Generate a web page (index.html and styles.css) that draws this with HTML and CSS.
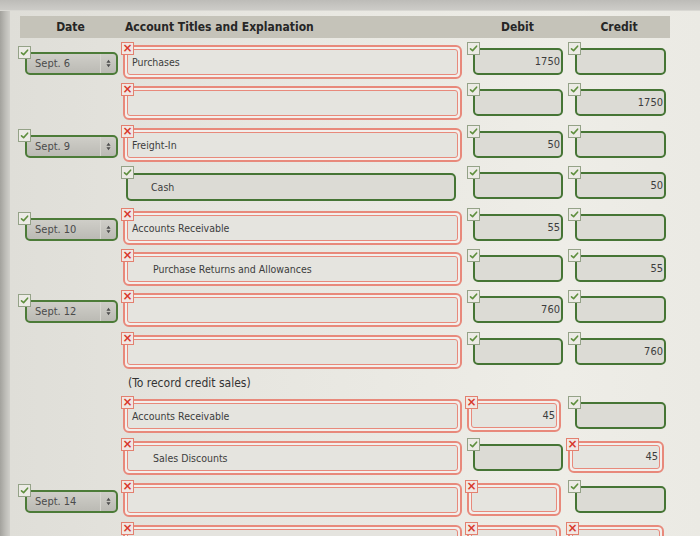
FILE: index.html
```html
<!DOCTYPE html>
<html>
<head>
<meta charset="utf-8">
<link rel="stylesheet" href="styles.css">
</head>
<body>
<div class="screen">
  <div class="topbar"></div>
  <div class="main">
    <div class="leftbar"></div>
    <div class="panel">
      <div class="header">
        <div class="h-date">Date</div>
        <div class="h-acct">Account Titles and Explanation</div>
        <div class="h-num">Debit</div>
        <div class="h-num">Credit</div>
      </div>

      <div class="rows">
        <!-- 1 -->
        <div class="row">
          <div class="cell date"><span class="icon ok"><svg viewBox="0 0 11 11"><path d="M2.5 5.8 L4.6 7.6 L8.6 3.2"/></svg></span><div class="select"><span class="val">Sept. 6</span><span class="arrows"><svg viewBox="0 0 6 10"><path d="M3 0.5 L5.5 4 L0.5 4 Z M3 9.5 L5.5 6 L0.5 6 Z"/></svg></span></div></div>
          <div class="cell acct"><span class="icon bad">×</span><div class="field red"><div class="inner">Purchases</div></div></div>
          <div class="cell debit"><span class="icon ok"><svg viewBox="0 0 11 11"><path d="M2.5 5.8 L4.6 7.6 L8.6 3.2"/></svg></span><div class="field green num">1750</div></div>
          <div class="cell credit"><span class="icon ok"><svg viewBox="0 0 11 11"><path d="M2.5 5.8 L4.6 7.6 L8.6 3.2"/></svg></span><div class="field green num"></div></div>
        </div>
        <!-- 2 -->
        <div class="row">
          <div class="cell date"></div>
          <div class="cell acct"><span class="icon bad">×</span><div class="field red"><div class="inner"></div></div></div>
          <div class="cell debit"><span class="icon ok"><svg viewBox="0 0 11 11"><path d="M2.5 5.8 L4.6 7.6 L8.6 3.2"/></svg></span><div class="field green num"></div></div>
          <div class="cell credit"><span class="icon ok"><svg viewBox="0 0 11 11"><path d="M2.5 5.8 L4.6 7.6 L8.6 3.2"/></svg></span><div class="field green num">1750</div></div>
        </div>
        <!-- 3 -->
        <div class="row">
          <div class="cell date"><span class="icon ok"><svg viewBox="0 0 11 11"><path d="M2.5 5.8 L4.6 7.6 L8.6 3.2"/></svg></span><div class="select"><span class="val">Sept. 9</span><span class="arrows"><svg viewBox="0 0 6 10"><path d="M3 0.5 L5.5 4 L0.5 4 Z M3 9.5 L5.5 6 L0.5 6 Z"/></svg></span></div></div>
          <div class="cell acct"><span class="icon bad">×</span><div class="field red"><div class="inner">Freight-In</div></div></div>
          <div class="cell debit"><span class="icon ok"><svg viewBox="0 0 11 11"><path d="M2.5 5.8 L4.6 7.6 L8.6 3.2"/></svg></span><div class="field green num">50</div></div>
          <div class="cell credit"><span class="icon ok"><svg viewBox="0 0 11 11"><path d="M2.5 5.8 L4.6 7.6 L8.6 3.2"/></svg></span><div class="field green num"></div></div>
        </div>
        <!-- 4 -->
        <div class="row">
          <div class="cell date"></div>
          <div class="cell acct"><span class="icon ok"><svg viewBox="0 0 11 11"><path d="M2.5 5.8 L4.6 7.6 L8.6 3.2"/></svg></span><div class="field green indent">Cash</div></div>
          <div class="cell debit"><span class="icon ok"><svg viewBox="0 0 11 11"><path d="M2.5 5.8 L4.6 7.6 L8.6 3.2"/></svg></span><div class="field green num"></div></div>
          <div class="cell credit"><span class="icon ok"><svg viewBox="0 0 11 11"><path d="M2.5 5.8 L4.6 7.6 L8.6 3.2"/></svg></span><div class="field green num">50</div></div>
        </div>
        <!-- 5 -->
        <div class="row">
          <div class="cell date"><span class="icon ok"><svg viewBox="0 0 11 11"><path d="M2.5 5.8 L4.6 7.6 L8.6 3.2"/></svg></span><div class="select"><span class="val">Sept. 10</span><span class="arrows"><svg viewBox="0 0 6 10"><path d="M3 0.5 L5.5 4 L0.5 4 Z M3 9.5 L5.5 6 L0.5 6 Z"/></svg></span></div></div>
          <div class="cell acct"><span class="icon bad">×</span><div class="field red"><div class="inner">Accounts Receivable</div></div></div>
          <div class="cell debit"><span class="icon ok"><svg viewBox="0 0 11 11"><path d="M2.5 5.8 L4.6 7.6 L8.6 3.2"/></svg></span><div class="field green num">55</div></div>
          <div class="cell credit"><span class="icon ok"><svg viewBox="0 0 11 11"><path d="M2.5 5.8 L4.6 7.6 L8.6 3.2"/></svg></span><div class="field green num"></div></div>
        </div>
        <!-- 6 -->
        <div class="row">
          <div class="cell date"></div>
          <div class="cell acct"><span class="icon bad">×</span><div class="field red"><div class="inner indent">Purchase Returns and Allowances</div></div></div>
          <div class="cell debit"><span class="icon ok"><svg viewBox="0 0 11 11"><path d="M2.5 5.8 L4.6 7.6 L8.6 3.2"/></svg></span><div class="field green num"></div></div>
          <div class="cell credit"><span class="icon ok"><svg viewBox="0 0 11 11"><path d="M2.5 5.8 L4.6 7.6 L8.6 3.2"/></svg></span><div class="field green num">55</div></div>
        </div>
        <!-- 7 -->
        <div class="row">
          <div class="cell date"><span class="icon ok"><svg viewBox="0 0 11 11"><path d="M2.5 5.8 L4.6 7.6 L8.6 3.2"/></svg></span><div class="select"><span class="val">Sept. 12</span><span class="arrows"><svg viewBox="0 0 6 10"><path d="M3 0.5 L5.5 4 L0.5 4 Z M3 9.5 L5.5 6 L0.5 6 Z"/></svg></span></div></div>
          <div class="cell acct"><span class="icon bad">×</span><div class="field red"><div class="inner"></div></div></div>
          <div class="cell debit"><span class="icon ok"><svg viewBox="0 0 11 11"><path d="M2.5 5.8 L4.6 7.6 L8.6 3.2"/></svg></span><div class="field green num">760</div></div>
          <div class="cell credit"><span class="icon ok"><svg viewBox="0 0 11 11"><path d="M2.5 5.8 L4.6 7.6 L8.6 3.2"/></svg></span><div class="field green num"></div></div>
        </div>
        <!-- 8 -->
        <div class="row">
          <div class="cell date"></div>
          <div class="cell acct"><span class="icon bad">×</span><div class="field red"><div class="inner"></div></div></div>
          <div class="cell debit"><span class="icon ok"><svg viewBox="0 0 11 11"><path d="M2.5 5.8 L4.6 7.6 L8.6 3.2"/></svg></span><div class="field green num"></div></div>
          <div class="cell credit"><span class="icon ok"><svg viewBox="0 0 11 11"><path d="M2.5 5.8 L4.6 7.6 L8.6 3.2"/></svg></span><div class="field green num">760</div></div>
        </div>

        <div class="note">(To record credit sales)</div>

        <!-- 9 -->
        <div class="row r2">
          <div class="cell date"></div>
          <div class="cell acct"><span class="icon bad">×</span><div class="field red"><div class="inner">Accounts Receivable</div></div></div>
          <div class="cell debit"><span class="icon bad">×</span><div class="field red"><div class="inner num">45</div></div></div>
          <div class="cell credit"><span class="icon ok"><svg viewBox="0 0 11 11"><path d="M2.5 5.8 L4.6 7.6 L8.6 3.2"/></svg></span><div class="field green num"></div></div>
        </div>
        <!-- 10 -->
        <div class="row r2">
          <div class="cell date"></div>
          <div class="cell acct"><span class="icon bad">×</span><div class="field red"><div class="inner indent">Sales Discounts</div></div></div>
          <div class="cell debit"><span class="icon ok"><svg viewBox="0 0 11 11"><path d="M2.5 5.8 L4.6 7.6 L8.6 3.2"/></svg></span><div class="field green num"></div></div>
          <div class="cell credit"><span class="icon bad">×</span><div class="field red"><div class="inner num">45</div></div></div>
        </div>
        <!-- 11 -->
        <div class="row r2">
          <div class="cell date"><span class="icon ok"><svg viewBox="0 0 11 11"><path d="M2.5 5.8 L4.6 7.6 L8.6 3.2"/></svg></span><div class="select"><span class="val">Sept. 14</span><span class="arrows"><svg viewBox="0 0 6 10"><path d="M3 0.5 L5.5 4 L0.5 4 Z M3 9.5 L5.5 6 L0.5 6 Z"/></svg></span></div></div>
          <div class="cell acct"><span class="icon bad">×</span><div class="field red"><div class="inner"></div></div></div>
          <div class="cell debit"><span class="icon bad">×</span><div class="field red"><div class="inner num"></div></div></div>
          <div class="cell credit"><span class="icon ok"><svg viewBox="0 0 11 11"><path d="M2.5 5.8 L4.6 7.6 L8.6 3.2"/></svg></span><div class="field green num"></div></div>
        </div>
        <!-- 12 -->
        <div class="row r2">
          <div class="cell date"></div>
          <div class="cell acct"><span class="icon bad">×</span><div class="field red"><div class="inner"></div></div></div>
          <div class="cell debit"><span class="icon bad">×</span><div class="field red"><div class="inner num"></div></div></div>
          <div class="cell credit"><span class="icon bad">×</span><div class="field red"><div class="inner num"></div></div></div>
        </div>
      </div>
    </div>
  </div>
</div>
</body>
</html>
```
FILE: styles.css
```css
* { box-sizing: border-box; }
html, body { margin: 0; padding: 0; }
body {
  width: 700px;
  height: 536px;
  overflow: hidden;
  background: #e6e5df;
  font-family: "DejaVu Sans", "Liberation Sans", sans-serif;
  font-stretch: condensed;
  color: #3c3c3c;
}
.screen { display: flex; flex-direction: column; height: 536px; }
.topbar {
  height: 11px;
  flex: none;
  background: linear-gradient(#bdbcb8, #cdccc8);
  border-bottom: 1px solid #d9d8d3;
}
.main { flex: 1; display: flex; min-height: 0; }
.leftbar {
  width: 10px;
  flex: none;
  background: linear-gradient(90deg, #a3a29d, #bebdb8 55%, #d0cfca);
}
.panel {
  flex: 1;
  padding: 5px 0 0 8px;
  background: linear-gradient(90deg, #dfded8, #e7e6e0 35%, #eeede7 80%, #ebeae4);
  overflow: hidden;
}

/* header */
.header {
  margin-left: 2px;
  width: 650px;
  height: 22px;
  background: #c5c3b9;
  display: grid;
  grid-template-columns: 101px 346px 101px 102px;
  align-items: center;
  font-weight: bold;
  font-size: 12px;
  color: #262626;
}
.h-date { text-align: center; }
.h-acct { padding-left: 4px; }
.h-num { text-align: center; }

/* rows */
.rows { padding-top: 4px; }
.row {
  display: grid;
  grid-template-columns: 103px 346px 101px 100px;
  height: 41.4px;
}
.row.r2 { height: 42px; }
.note {
  height: 22.6px;
  padding-left: 110px;
  padding-top: 2px;
  font-size: 12px;
  color: #333;
  line-height: 16px;
}
.cell { position: relative; }

/* status icons (badges over the field corner) */
.icon {
  position: absolute;
  top: 0;
  left: 0;
  width: 13px;
  height: 13px;
  z-index: 2;
  display: flex;
  align-items: center;
  justify-content: center;
}
.icon.ok { border: 1px solid #94a287; background: #ecebe5; }
.icon.ok svg { width: 11px; height: 11px; fill: none; stroke: #5f8f3e; stroke-width: 1.6; stroke-linecap: round; stroke-linejoin: round; }
.icon.bad {
  border: 1px solid #e3806f;
  background: #f1e7e3;
  color: #d8382b;
  font-family: "DejaVu Sans", sans-serif;
  font-stretch: normal;
  font-weight: bold;
  font-size: 12px;
  line-height: 11px;
}

/* fields */
.field { font-size: 10.5px; color: #3d3d3d; }
.field.red {
  margin: 3px 0 0 2px;
  height: 34px;
  border: 2px solid #e8897b;
  border-radius: 6px;
  padding: 2px;
  background: #f3efec;
}
.field.red .inner {
  height: 100%;
  border: 1px solid #e8897b;
  border-radius: 3px;
  background: #e5e4df;
  display: flex;
  align-items: center;
  padding: 0 4px;
}
.field.green {
  margin: 6px 0 0 7px;
  height: 27px;
  border: 2px solid #467535;
  border-radius: 5px;
  background: #dcdbd5;
  display: flex;
  align-items: center;
  padding: 0 5px;
}
.acct .field.red { width: 339px; }
.acct .field.green { width: 330px; margin: 7px 0 0 5px; height: 28px; }
.debit .field.green { width: 90px; margin-left: 6px; }
.debit .field.red { width: 94px; margin-left: 0; height: 33px; }
.debit .icon.bad { left: -2px; }
.credit .field.green { width: 91px; margin-left: 7px; }
.credit .field.red { width: 96px; margin-left: 0; height: 32px; }
.credit .icon.bad { left: -2px; }
.field.green.num, .field.red .inner.num { justify-content: flex-end; padding-right: 1px; font-size: 11px; }
.field.red .inner.indent { padding-left: 25px; }
.field.green.indent { padding-left: 23px; }

/* date select */
.date .icon { top: 4px; }
.select {
  margin: 10px 0 0 7px;
  width: 93px;
  height: 23px;
  border: 2px solid #4c7b38;
  border-radius: 5px;
  background: linear-gradient(#cfcec8, #bbbab4);
  display: flex;
  align-items: center;
  font-size: 11px;
  color: #4b4b4b;
}
.select .val { flex: 1; padding-left: 8px; }
.select .arrows {
  width: 16px;
  height: 100%;
  border-left: 1px solid #d7d6d0;
  display: flex;
  align-items: center;
  justify-content: center;
}
.select .arrows svg { width: 5px; height: 9px; fill: #4e4e4e; }
```
